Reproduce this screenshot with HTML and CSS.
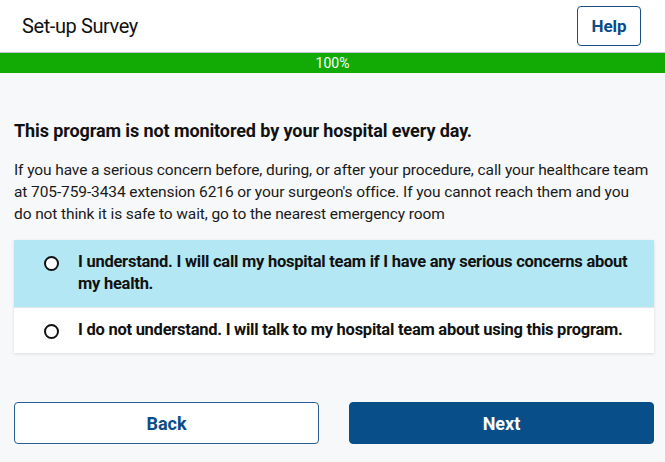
FILE: index.html
```html
<!DOCTYPE html>
<html>
<head>
<meta charset="utf-8">
<link rel="stylesheet" href="styles.css">
</head>
<body>
<header class="topbar">
  <h1 class="title">Set-up Survey</h1>
  <button class="help">Help</button>
</header>
<div class="progress"><div class="progress-fill" style="width:100%">100%</div></div>
<main class="content">
  <h2 class="heading">This program is not monitored by your hospital every day.</h2>
  <p class="body">If you have a serious concern before, during, or after your procedure, call your healthcare team at 705-759-3434 extension 6216 or your surgeon's office. If you cannot reach them and you do&nbsp;not think it is safe to wait, go to the nearest emergency room</p>
  <div class="options">
    <label class="option selected"><span class="radio"></span><span class="opt-text">I understand. I will call my hospital team if I have any serious concerns about my health.</span></label>
    <label class="option"><span class="radio"></span><span class="opt-text">I do not understand. I will talk to my hospital team about using this program.</span></label>
  </div>
  <div class="actions">
    <button class="btn btn-back">Back</button>
    <button class="btn btn-next">Next</button>
  </div>
</main>
</body>
</html>
```
FILE: styles.css
```css
* { box-sizing: border-box; }
html, body { margin: 0; padding: 0; }
body {
  background: #f7f8fa;
  font-family: Roboto, "Liberation Sans", Arial, sans-serif;
  color: #111;
  width: 665px;
  height: 462px;
  overflow: hidden;
}
.topbar {
  height: 53px;
  background: #fff;
  border-bottom: 1px solid #c3c6cc;
  display: flex;
  align-items: center;
  justify-content: space-between;
  padding: 0 24px 0 22px;
}
.title {
  margin: 0;
  font-size: 20px;
  letter-spacing: -0.4px;
  font-weight: 400;
  color: #111;
}
.help {
  width: 64px;
  height: 40px;
  background: #fff;
  border: 1px solid #1a4f86;
  border-radius: 4px;
  color: #0a4c86;
  font-family: inherit;
  font-size: 17px;
  font-weight: 700;
}
.progress {
  height: 20px;
  background: #e6e6e6;
}
.progress-fill {
  height: 100%;
  background: #12ab05;
  color: #fff;
  font-size: 14px;
  line-height: 20px;
  text-align: center;
}
.content {
  padding: 0 11px 0 14px;
}
.heading {
  margin: 47px 0 0;
  font-size: 18px;
  letter-spacing: -0.1px;
  font-weight: 700;
  line-height: 22px;
}
.body {
  margin: 17px 0 0;
  max-width: 638px;
  font-size: 15.5px;
  letter-spacing: -0.1px;
  line-height: 22px;
  color: #1a1a1a;
}
.options {
  margin-top: 15px;
  background: #fff;
  box-shadow: 0 1px 3px rgba(0,0,0,0.12);
  display: flex;
  flex-direction: column;
}
.option {
  display: flex;
  align-items: flex-start;
  gap: 19px;
  padding: 11px 20px 12px 30px;
  font-size: 16.5px;
  letter-spacing: -0.25px;
  font-weight: 700;
  line-height: 22px;
}
.option + .option { border-top: 1px solid #e4e6ea; }
.option.selected { background: #b2e7f3; }
.radio {
  flex: none;
  width: 15px;
  height: 15px;
  margin-top: 5px;
  border: 2px solid #111;
  border-radius: 50%;
  background: #fff;
}
.actions {
  margin-top: 49px;
  display: flex;
  gap: 30px;
}
.btn {
  flex: 1;
  height: 42px;
  border-radius: 4px;
  font-family: inherit;
  font-size: 18px;
  font-weight: 700;
}
.btn-back {
  background: #fff;
  border: 1px solid #2a5d93;
  color: #0a4c86;
}
.btn-next {
  background: #084e88;
  border: 1px solid #084e88;
  color: #fff;
}
```
